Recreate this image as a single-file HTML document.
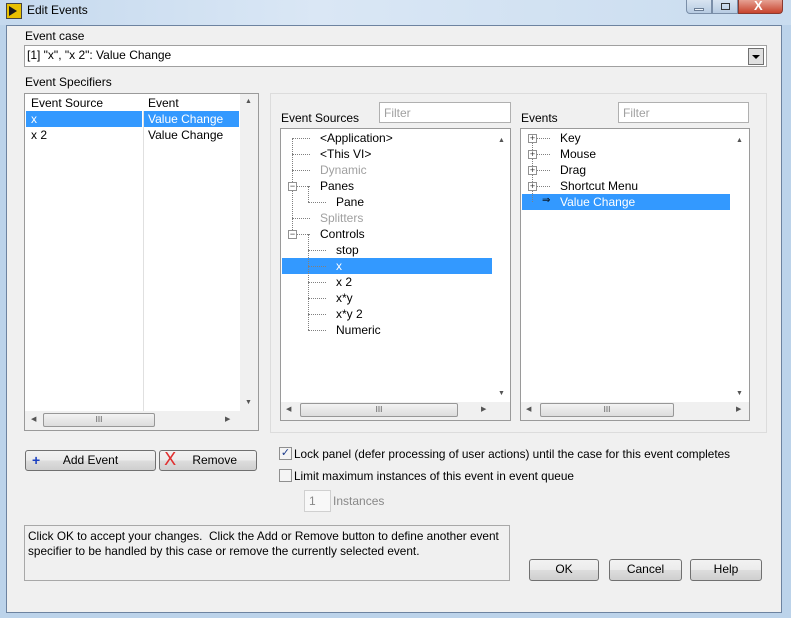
<!DOCTYPE html>
<html><head><style>
*{margin:0;padding:0;box-sizing:border-box}
body{width:791px;height:618px;overflow:hidden;background:#bcd3ea;font-family:"Liberation Sans",sans-serif;font-size:12px;color:#000;position:relative}
.a{position:absolute;white-space:nowrap}
.box{position:absolute;background:#fff;border:1px solid #9a9a9a}
.sel{position:absolute;background:#3399ff;color:#fff}
.btn{position:absolute;border:1px solid #707070;border-radius:3px;background:linear-gradient(#f2f2f2,#ebebeb 50%,#dddddd 51%,#cfcfcf);text-align:center;line-height:19px}
.sb{position:absolute;background:#f0f0f0}
.thumb{position:absolute;border:1px solid #979797;border-radius:2px;background:linear-gradient(#f3f3f3,#dcdcdc);text-align:center;font-size:8px;line-height:12px;color:#555}
.gray{color:#a0a0a0}
.dot{position:absolute;border-top:1px dotted #808080}
.vdot{position:absolute;border-left:1px dotted #808080}
.pm{position:absolute;width:9px;height:9px;border:1px solid #919191;background:#fff;font-size:9px;line-height:7px;text-align:center;color:#333}
</style></head><body>
<div class="a" style="left:0;top:0;width:791px;height:25px;background:linear-gradient(90deg,#c5d9ee,#dae7f5 40%,#c9dcef)"></div>
<div class="a" style="left:6px;top:3px;width:16px;height:16px;background:#e8c000;border:1px solid #444"></div>
<div class="a" style="left:9px;top:6px;width:0;height:0;border-left:8px solid #1a1a1a;border-top:5px solid transparent;border-bottom:5px solid transparent"></div>
<div class="a" style="left:27px;top:3px;font-size:12px">Edit Events</div>
<div class="a" style="left:686px;top:0;width:26px;height:14px;border:1px solid #7a8ea8;border-top:none;border-radius:0 0 0 4px;background:linear-gradient(#d8e4f1,#b7cbe2)"></div>
<div class="a" style="left:712px;top:0;width:26px;height:14px;border:1px solid #7a8ea8;border-top:none;background:linear-gradient(#d8e4f1,#b7cbe2)"></div>
<div class="a" style="left:738px;top:0;width:45px;height:14px;border:1px solid #8a3a30;border-top:none;border-radius:0 0 4px 0;background:linear-gradient(#e6a193,#c7432d)"></div>
<div class="a" style="left:754px;top:-2px;color:#fff;font-weight:bold;font-size:13px">X</div>
<div class="a" style="left:721px;top:3px;width:9px;height:7px;border:1px solid #333"></div>
<div class="a" style="left:694px;top:8px;width:10px;height:3px;background:#eef3f9;border:1px solid #6b7d95"></div>

<div class="a" style="left:6px;top:25px;width:776px;height:588px;background:#f0f0f0;border:1px solid #6d83a0"></div>

<div class="a" style="left:25px;top:29px">Event case</div>
<div class="box" style="left:24px;top:45px;width:743px;height:22px;border-color:#a0a0a0"></div>
<div class="a" style="left:27px;top:48px">[1] "x", "x 2": Value Change</div>
<div class="a" style="left:748px;top:48px;width:16px;height:17px;border:1px solid #707070;background:#e0e0e0"></div>
<div class="a" style="left:752px;top:55px;border-top:4px solid #000;border-left:4px solid transparent;border-right:4px solid transparent"></div>

<div class="a" style="left:25px;top:75px">Event Specifiers</div>
<div class="box" style="left:24px;top:93px;width:235px;height:338px"></div>
<div class="a" style="left:31px;top:96px">Event Source</div>
<div class="a" style="left:148px;top:96px">Event</div>
<div class="a" style="left:143px;top:111px;width:1px;height:300px;background:#e0e0e0"></div>
<div class="sel" style="left:26px;top:111px;width:116px;height:16px"></div>
<div class="sel" style="left:144px;top:111px;width:95px;height:16px"></div>
<div class="a" style="left:31px;top:112px;color:#fff">x</div>
<div class="a" style="left:148px;top:112px;color:#fff">Value Change</div>
<div class="a" style="left:31px;top:128px">x 2</div>
<div class="a" style="left:148px;top:128px">Value Change</div>
<div class="sb" style="left:240px;top:94px;width:18px;height:317px"></div>
<div class="a" style="left:245px;top:98px;font-size:7px;color:#555">▲</div>
<div class="a" style="left:245px;top:399px;font-size:7px;color:#555">▼</div>
<div class="sb" style="left:25px;top:411px;width:233px;height:19px"></div>
<div class="a" style="left:31px;top:415px;font-size:7px;color:#555">◀</div>
<div class="a" style="left:225px;top:415px;font-size:7px;color:#555">▶</div>
<div class="thumb" style="left:43px;top:413px;width:112px;height:14px">III</div>

<div class="a" style="left:270px;top:93px;width:497px;height:340px;border:1px solid #dcdcdc"></div>
<div class="a" style="left:281px;top:111px">Event Sources</div>
<div class="box" style="left:379px;top:102px;width:132px;height:21px;border-color:#b0b0b0"></div>
<div class="a gray" style="left:384px;top:106px">Filter</div>
<div class="box" style="left:280px;top:128px;width:231px;height:293px"></div>
<div class="sel" style="left:282px;top:258px;width:210px;height:16px"></div>
<div class="vdot" style="left:292px;top:138px;height:96px"></div>
<div class="vdot" style="left:308px;top:186px;height:16px"></div>
<div class="vdot" style="left:308px;top:234px;height:96px"></div>
<div class="dot" style="left:292px;top:138px;width:18px"></div>
<div class="dot" style="left:292px;top:154px;width:18px"></div>
<div class="dot" style="left:292px;top:170px;width:18px"></div>
<div class="dot" style="left:292px;top:186px;width:18px"></div>
<div class="dot" style="left:292px;top:218px;width:18px"></div>
<div class="dot" style="left:292px;top:234px;width:18px"></div>
<div class="dot" style="left:308px;top:202px;width:18px"></div>
<div class="dot" style="left:308px;top:250px;width:18px"></div>
<div class="dot" style="left:308px;top:266px;width:18px"></div>
<div class="dot" style="left:308px;top:282px;width:18px"></div>
<div class="dot" style="left:308px;top:298px;width:18px"></div>
<div class="dot" style="left:308px;top:314px;width:18px"></div>
<div class="dot" style="left:308px;top:330px;width:18px"></div>
<div class="pm" style="left:288px;top:182px">−</div>
<div class="pm" style="left:288px;top:230px">−</div>
<div class="a" style="left:320px;top:131px">&lt;Application&gt;</div>
<div class="a" style="left:320px;top:147px">&lt;This VI&gt;</div>
<div class="a gray" style="left:320px;top:163px">Dynamic</div>
<div class="a" style="left:320px;top:179px">Panes</div>
<div class="a" style="left:336px;top:195px">Pane</div>
<div class="a gray" style="left:320px;top:211px">Splitters</div>
<div class="a" style="left:320px;top:227px">Controls</div>
<div class="a" style="left:336px;top:243px">stop</div>
<div class="a" style="left:336px;top:259px;color:#fff">x</div>
<div class="a" style="left:336px;top:275px">x 2</div>
<div class="a" style="left:336px;top:291px">x*y</div>
<div class="a" style="left:336px;top:307px">x*y 2</div>
<div class="a" style="left:336px;top:323px">Numeric</div>
<div class="a" style="left:498px;top:137px;font-size:7px;color:#555">▲</div>
<div class="a" style="left:498px;top:390px;font-size:7px;color:#555">▼</div>
<div class="sb" style="left:281px;top:402px;width:229px;height:18px"></div>
<div class="a" style="left:286px;top:405px;font-size:7px;color:#555">◀</div>
<div class="a" style="left:481px;top:405px;font-size:7px;color:#555">▶</div>
<div class="thumb" style="left:300px;top:403px;width:158px;height:14px">III</div>

<div class="a" style="left:521px;top:111px">Events</div>
<div class="box" style="left:618px;top:102px;width:131px;height:21px;border-color:#b0b0b0"></div>
<div class="a gray" style="left:623px;top:106px">Filter</div>
<div class="box" style="left:520px;top:128px;width:230px;height:293px"></div>
<div class="sel" style="left:522px;top:194px;width:208px;height:16px"></div>
<div class="vdot" style="left:532px;top:138px;height:64px"></div>
<div class="dot" style="left:532px;top:138px;width:18px"></div>
<div class="dot" style="left:532px;top:154px;width:18px"></div>
<div class="dot" style="left:532px;top:170px;width:18px"></div>
<div class="dot" style="left:532px;top:186px;width:18px"></div>
<div class="pm" style="left:528px;top:134px">+</div>
<div class="pm" style="left:528px;top:150px">+</div>
<div class="pm" style="left:528px;top:166px">+</div>
<div class="pm" style="left:528px;top:182px">+</div>
<div class="a" style="left:542px;top:195px;font-size:10px">⇒</div>
<div class="a" style="left:560px;top:131px">Key</div>
<div class="a" style="left:560px;top:147px">Mouse</div>
<div class="a" style="left:560px;top:163px">Drag</div>
<div class="a" style="left:560px;top:179px">Shortcut Menu</div>
<div class="a" style="left:560px;top:195px;color:#fff">Value Change</div>
<div class="a" style="left:736px;top:137px;font-size:7px;color:#555">▲</div>
<div class="a" style="left:736px;top:390px;font-size:7px;color:#555">▼</div>
<div class="sb" style="left:521px;top:402px;width:228px;height:18px"></div>
<div class="a" style="left:526px;top:405px;font-size:7px;color:#555">◀</div>
<div class="a" style="left:736px;top:405px;font-size:7px;color:#555">▶</div>
<div class="thumb" style="left:540px;top:403px;width:134px;height:14px">III</div>

<div class="btn" style="left:25px;top:450px;width:131px;height:21px"><span style="position:absolute;left:6px;color:#1a3fc0;font-weight:bold;font-size:14px">+</span>Add Event</div>
<div class="btn" style="left:159px;top:450px;width:98px;height:21px"><span style="position:absolute;left:4px;top:-1px;color:#e03030;font-size:18px;font-family:'DejaVu Sans',sans-serif">X</span>&nbsp;&nbsp;&nbsp;&nbsp;Remove</div>

<div class="a" style="left:279px;top:447px;width:13px;height:13px;border:1px solid #8f8f8f;background:#f4f4f4;font-size:11px;line-height:11px;text-align:center;color:#1c3b8a">✓</div>
<div class="a" style="left:294px;top:447px;font-size:11.8px">Lock panel (defer processing of user actions) until the case for this event completes</div>
<div class="a" style="left:279px;top:469px;width:13px;height:13px;border:1px solid #8f8f8f;background:#f4f4f4"></div>
<div class="a" style="left:294px;top:469px;font-size:11.8px">Limit maximum instances of this event in event queue</div>
<div class="a" style="left:304px;top:490px;width:27px;height:22px;border:1px solid #d0d0d0;background:#f8f8f8"></div>
<div class="a gray" style="left:309px;top:494px;color:#888">1</div>
<div class="a gray" style="left:333px;top:494px;color:#888">Instances</div>

<div class="a" style="left:24px;top:525px;width:486px;height:56px;border:1px solid #a8a8a8"></div>
<div class="a" style="left:28px;top:529px;line-height:15px;font-size:11.8px">Click OK to accept your changes.&nbsp; Click the Add or Remove button to define another event<br>specifier to be handled by this case or remove the currently selected event.</div>

<div class="btn" style="left:529px;top:559px;width:70px;height:22px">OK</div>
<div class="btn" style="left:609px;top:559px;width:73px;height:22px">Cancel</div>
<div class="btn" style="left:690px;top:559px;width:72px;height:22px">Help</div>
</body></html>
